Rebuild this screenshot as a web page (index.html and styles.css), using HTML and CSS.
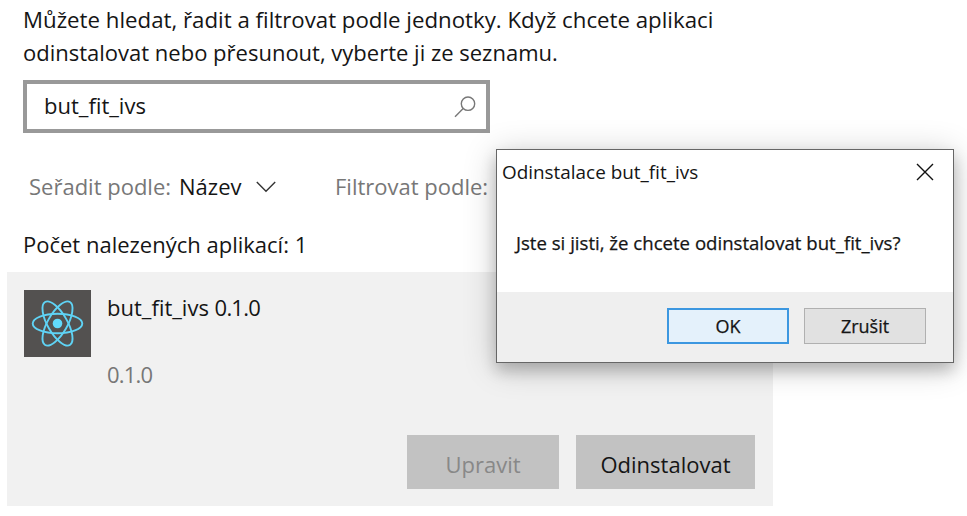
FILE: index.html
```html
<!DOCTYPE html>
<html lang="cs">
<head>
<meta charset="utf-8">
<title>Aplikace a funkce</title>
<link rel="stylesheet" href="styles.css">
</head>
<body>
<main class="page">
  <p class="intro"><span class="intro-first">Můžete hledat, řadit a filtrovat podle jednotky. Když chcete aplikaci</span><span>odinstalovat nebo přesunout, vyberte ji ze seznamu.</span></p>
  <div class="search">
    <span>but_fit_ivs</span>
    <svg class="search-icon" width="22" height="22" viewBox="0 0 22 22"><circle cx="14" cy="7.7" r="6.7"/><path d="M9.2 12.6 1 20.8"/></svg>
  </div>
  <div class="filters">
    <div class="filter"><span>Seřadit podle:</span><span class="value">Název</span>
      <svg class="chevron" width="20" height="12" viewBox="0 0 20 12"><path d="M.8 1 10 10.2 19.2 1"/></svg></div>
    <div class="filter">Filtrovat podle:</div>
  </div>
  <p class="count">Počet nalezených aplikací: 1</p>
  <section class="app">
    <div class="app-head">
      <svg class="logo" width="67" height="67" viewBox="0 0 67 67">
        <rect width="67" height="67" fill="#535150"/>
        <g fill="none" stroke="#5fd3f5" stroke-width="1.9">
          <ellipse cx="33.5" cy="33.5" rx="24.8" ry="9.8"/>
          <ellipse cx="33.5" cy="33.5" rx="24.8" ry="9.8" transform="rotate(60 33.5 33.5)"/>
          <ellipse cx="33.5" cy="33.5" rx="24.8" ry="9.8" transform="rotate(120 33.5 33.5)"/>
        </g>
        <circle cx="33.5" cy="33.5" r="4.8" fill="#61dafb"/>
      </svg>
      <div class="app-text">
        <div class="name">but_fit_ivs <span class="digits">0.1.0</span></div>
        <div class="version digits">0.1.0</div>
      </div>
    </div>
    <div class="actions">
      <button class="btn modify" disabled>Upravit</button>
      <button class="btn uninstall">Odinstalovat</button>
    </div>
  </section>
</main>
<div class="dialog" role="dialog">
  <header class="titlebar">
    <span>Odinstalace but_fit_ivs</span>
    <svg width="18" height="18" viewBox="0 0 18 18"><path d="M1 1 17 17M17 1 1 17"/></svg>
  </header>
  <p class="message">Jste si jisti, že chcete odinstalovat but_fit_ivs?</p>
  <footer class="dialog-actions">
    <button class="dbtn ok">OK</button>
    <button class="dbtn cancel">Zrušit</button>
  </footer>
</div>
</body>
</html>
```
FILE: styles.css
```css
* { box-sizing: border-box; }
body {
  margin: 0;
  width: 967px;
  height: 516px;
  overflow: hidden;
  background: #fff;
  color: #151515;
  font: 22px/32px "Open Sans", "Noto Sans", sans-serif;
  white-space: nowrap;
}
p { margin: 0; }
button { font: inherit; padding: 0; border: 0; }
svg { display: block; flex: none; }

.page { padding: 4px 0 0 7px; }
.intro { display: flex; flex-direction: column; padding-left: 16px; height: 76px; }
.intro-first { font-size: 22.25px; }

.search {
  display: flex;
  align-items: center;
  justify-content: space-between;
  width: 467px;
  height: 53px;
  margin-left: 16px;
  padding: 0 10px 3px 17px;
  border: 4px solid #999;
}
.search-icon { fill: none; stroke: #777; stroke-width: 1.4; margin-top: 3px; }

.filters {
  display: flex;
  height: 32px;
  margin: 37px 0 0 22px;
  color: #777;
}
.filter { display: flex; align-items: center; }
.filter:first-child { width: 306px; }
.value { margin-left: 8px; color: #151515; }
.chevron { margin: 2px 0 0 14px; fill: none; stroke: #333; stroke-width: 1.4; }

.count { margin: 26px 0 0 16px; height: 44px; }

.app {
  width: 766px;
  height: 234px;
  padding: 18px 18px 17px 17px;
  background: #f1f1f1;
  display: flex;
  flex-direction: column;
  justify-content: space-between;
}
.app-head { display: flex; gap: 16px; }
.name { margin-top: 1px; }
.version { margin-top: 35px; color: #777; }
.digits { letter-spacing: -.8px; }
.actions { display: flex; justify-content: flex-end; gap: 17px; }
.btn { height: 54px; background: #c2c2c2; color: #151515; padding-top: 3px; }
.modify { width: 152px; color: #888; }
.uninstall { width: 179px; }

.dialog {
  position: absolute;
  left: 496px;
  top: 149px;
  width: 458px;
  height: 214px;
  display: flex;
  flex-direction: column;
  border: 1px solid #666;
  background: #fff;
  box-shadow: 0 8px 14px rgba(0, 0, 0, .2), 0 4px 32px rgba(0, 0, 0, .2);
  font-size: 18.9px;
}
.titlebar {
  display: flex;
  justify-content: space-between;
  align-items: center;
  height: 44px;
  padding: 0 19px 0 5px;
}
.titlebar svg { fill: none; stroke: #111; stroke-width: 1.4; }
.message {
  flex: 1;
  padding: 33px 0 0 19px;
  font-size: 18.6px;
}
.message, .dbtn { -webkit-text-stroke: .25px; }
.dialog-actions {
  display: flex;
  justify-content: flex-end;
  gap: 15px;
  height: 70px;
  padding: 16px 27px 0 0;
  background: #efefef;
}
.dbtn { width: 122px; height: 36px; font-size: 18px; line-height: 30px; color: #151515; }
.ok { background: #e4f1fb; border: 2px solid #3c97e0; }
.cancel { background: #e1e1e1; border: 1.5px solid #b0b0b0; }
```
